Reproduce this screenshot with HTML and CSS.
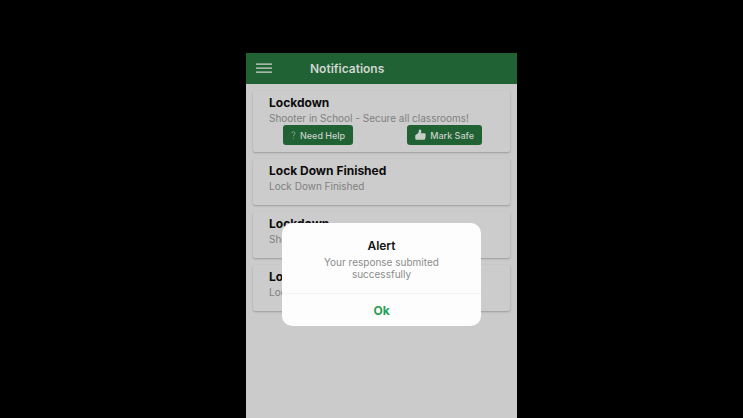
FILE: index.html
```html
<!DOCTYPE html>
<html lang="en">
<head>
<meta charset="utf-8">
<meta name="viewport" content="width=device-width, initial-scale=1">
<title>Notifications</title>
<link rel="stylesheet" href="styles.css">
</head>
<body>
<div class="stage">
  <div class="app">
    <header class="bar">
      <button class="menu" type="button" aria-label="Menu">
        <svg width="16" height="12" viewBox="0 0 16 12" stroke="currentColor" stroke-width="1.3"><path d="M0 1.200h16M0 5.200h16M0 9.200h16"/></svg>
      </button>
      <h1 class="bar-title">Notifications</h1>
    </header>
    <main class="list">
      <article class="card">
        <h2 class="card-title">Lockdown</h2>
        <p class="card-text">Shooter in School - Secure all classrooms!</p>
        <div class="actions">
          <button class="action" type="button">
            <svg width="5" height="9" viewBox="0 0 5 9" fill="none" stroke="currentColor" stroke-width=".6"><path d="M.8 2.200C.9 1.200 1.500 .8 2.300 .8c1 0 1.700 .6 1.700 1.500 0 1.400-1.600 1.500-1.600 3M2.400 6.800v.9"/></svg>
            Need Help
          </button>
          <button class="action" type="button">
            <svg width="11" height="12" viewBox="0 0 11 12" fill="currentColor"><path d="M.3 6.200C1.500 5.400 3 4.600 3.600 3.300 3.900 2.500 3.700 1.300 4.100.8c.6-.7 1.700-.3 2 .5.300.9.100 2-.2 3h3.600c1.200 0 1.500 1.100.9 1.700.6.500.5 1.300 0 1.700.4.600.1 1.300-.4 1.500.2.900-.3 1.600-1.200 1.600H2.400C1 10.800.3 10.400.2 9.500z"/></svg>
            Mark Safe
          </button>
        </div>
      </article>
      <article class="card">
        <h2 class="card-title">Lock Down Finished</h2>
        <p class="card-text">Lock Down Finished</p>
      </article>
      <article class="card">
        <h2 class="card-title">Lockdown</h2>
        <p class="card-text">Shooter in School - Secure all classrooms!</p>
      </article>
      <article class="card">
        <h2 class="card-title">Lock Down Finished</h2>
        <p class="card-text">Lock Down Finished</p>
      </article>
    </main>
    <div class="overlay">
      <section class="dialog" role="alertdialog" aria-labelledby="alert-title" aria-describedby="alert-text">
        <h2 class="dialog-title" id="alert-title">Alert</h2>
        <p class="dialog-text" id="alert-text">Your response submited successfully</p>
        <button class="ok" type="button">Ok</button>
      </section>
    </div>
  </div>
</div>
</body>
</html>
```
FILE: styles.css
```css
* { box-sizing: border-box; }

body {
  margin: 0;
  background: #000;
  font-family: Inter, "Liberation Sans", sans-serif;
}

h1, h2, p { margin: 0; }

button {
  border: 0;
  font-family: inherit;
  cursor: pointer;
}

.stage {
  display: grid;
  grid-template-columns: 246fr 271fr 226fr;
  min-height: 100vh;
  padding-top: 53px;
}

.app {
  grid-column: 2;
  position: relative;
  background: #cbcbcb;
}

.bar {
  display: flex;
  align-items: center;
  height: 31px;
  padding: 0 10px;
  background: #216234;
  color: #cfd5d0;
}

.menu {
  display: flex;
  padding: 0;
  background: none;
  color: inherit;
}

.bar-title {
  margin-left: 38px;
  font-size: 12px;
  line-height: 16px;
  font-weight: 600;
}

.list {
  display: grid;
  gap: 7px;
  padding: 7px;
}

.card {
  min-height: 46px;
  padding: 4px 16px 7px;
  border-radius: 2px;
  background: #cccccc;
  box-shadow: 0 1px 2px rgba(0, 0, 0, 0.24);
}

.card-title {
  font-size: 12px;
  line-height: 16px;
  font-weight: 700;
  color: #0c0c0c;
}

.card-text {
  font-size: 10px;
  line-height: 14px;
  color: #808080;
  white-space: nowrap;
}

.actions {
  display: flex;
  justify-content: space-between;
  padding: 0 12px 0 14px;
}

.action {
  display: flex;
  align-items: center;
  gap: 4px;
  height: 20px;
  padding: 0 8px;
  border-radius: 3px;
  background: #216234;
  color: #c8cec9;
  font-size: 9px;
  font-weight: 500;
  white-space: nowrap;
}

.overlay {
  position: absolute;
  inset: 0;
  display: flex;
  align-items: flex-start;
  padding: 170px 36px 0;
}

.dialog {
  flex: 1;
  padding-top: 14px;
  border-radius: 10px;
  background: #fdfdfd;
  text-align: center;
}

.dialog-title {
  font-size: 12px;
  line-height: 18px;
  font-weight: 600;
  color: #151515;
}

.dialog-text {
  padding: 1px 36px 13px;
  font-size: 10px;
  line-height: 12px;
  color: #8c8c8c;
}

.ok {
  width: 100%;
  height: 33px;
  padding: 0;
  border-top: 1px solid #f3f3f3;
  border-radius: 0 0 10px 10px;
  background: none;
  color: #26a054;
  font-size: 12px;
  font-weight: 700;
}
```
